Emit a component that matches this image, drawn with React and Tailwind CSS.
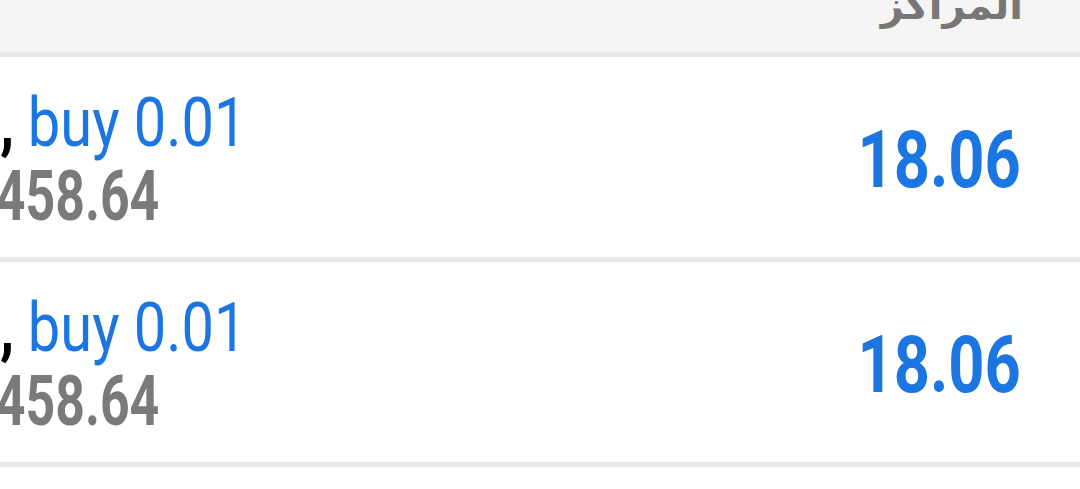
import React from 'react';

const rows = [
  { side: 'buy', volume: '0.01', price: '1458.64', profit: '18.06' },
  { side: 'buy', volume: '0.01', price: '1458.64', profit: '18.06' },
];

function PositionRow({ side, volume, price, profit }) {
  return (
    <>
      <div className="h-[200px] flex justify-between items-center">
        <div className="self-start pt-[30px]">
          <div className="text-[68px] leading-[73px] whitespace-nowrap origin-left scale-x-[0.85]">
            <span className="font-bold text-black">,</span>
            <span className="text-[#1b76e2] ml-[16px]">
              {side} {volume}
            </span>
          </div>
          <div className="text-[70px] leading-[73px] font-bold text-[#7a7a7a] whitespace-nowrap -ml-[34px] origin-left scale-x-[0.74]">
            {price}
          </div>
        </div>
        <div className="pr-[59px] pt-[5px]">
          <div className="text-[80px] leading-none font-bold text-[#1b76e2] origin-right scale-x-[0.79]">
            {profit}
          </div>
        </div>
      </div>
      <div className="h-[5px] bg-[#e8e8e8]" />
    </>
  );
}

export default function App() {
  return (
    <div className="w-[1080px] h-[489px] overflow-hidden bg-white font-['Roboto','Liberation_Sans',sans-serif]">
      <div className="h-[52px] bg-[#f5f5f5] flex justify-end pr-[57px] overflow-hidden">
        <span
          dir="rtl"
          className="text-[40px] leading-none font-bold text-[#777] -mt-[15px] font-['DejaVu_Sans','Noto_Sans',sans-serif]"
        >
          المراكز
        </span>
      </div>
      <div className="h-[5px] bg-[#e8e8e8]" />
      {rows.map((r, i) => (
        <PositionRow key={i} {...r} />
      ))}
    </div>
  );
}
